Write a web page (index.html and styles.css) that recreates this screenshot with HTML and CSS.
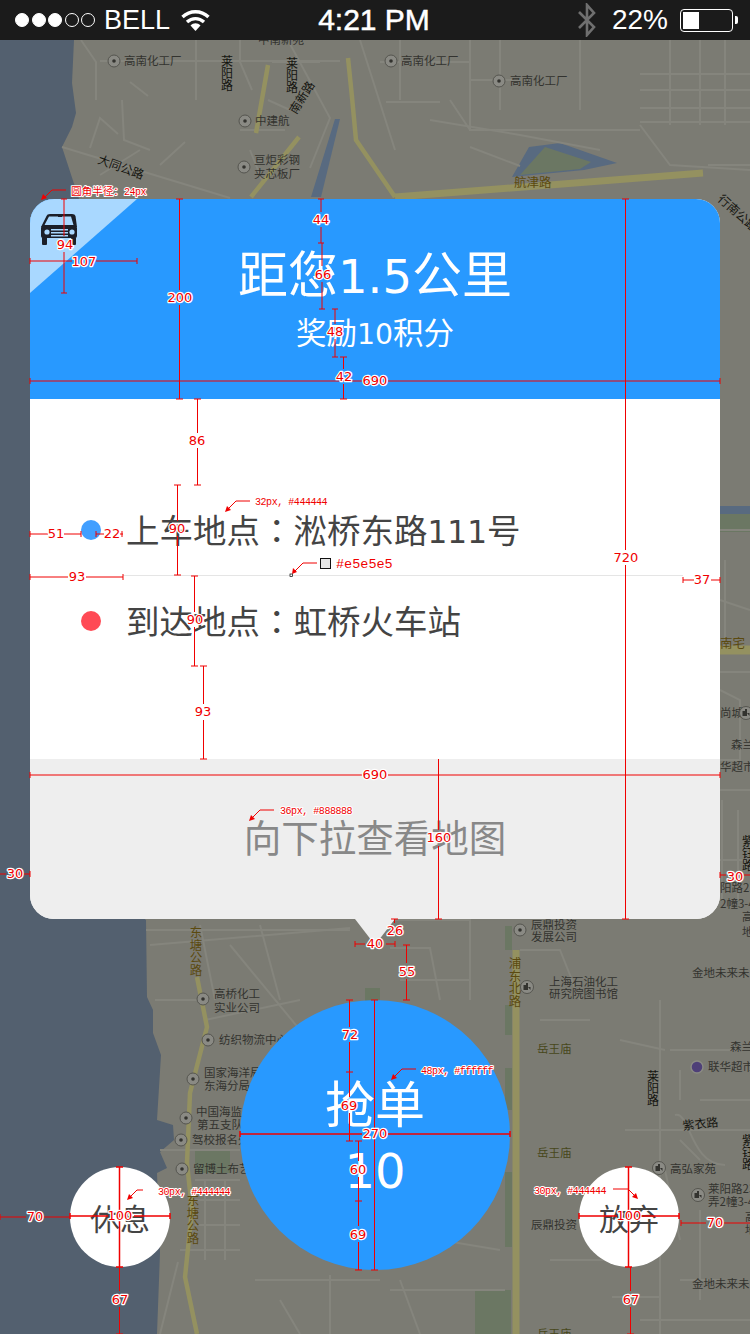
FILE: index.html
```html
<!DOCTYPE html>
<html lang="en">
<head>
    <meta charset="UTF-8">
    <title>抢单</title>
    <link rel="stylesheet" href="styles.css">
</head>
<body>
<!-- map canvas -->
<svg class="map" viewBox="0 0 750 1334" width="750" height="1334">
    <defs>
        <g id="pin">
            <circle r="6" class="pin-ring"/>
            <circle r="1.8" class="pin-dot"/>
        </g>
        <g id="pin-house">
            <circle r="6.5" class="pin-ring"/>
            <path d="M-3.5 3V-2H-1V-4H1V3M1 0H3.5V3Z" class="pin-dot"/>
        </g>
    </defs>
    <polygon class="water" points="0,40 74,40 72,83 76,113 72,127 62,147 79,199 120,300 120,900 146,920 147,997 153,1010 153,1033 161,1055 157,1120 173,1125 174,1140 160,1152 167,1168 157,1173 160,1253 157,1334 0,1334"/>

    <polygon class="lake" points="529,147 560,143 617,163 584,170 512,177"/>
    <polygon class="green" points="545,147 591,162 580,169 520,175"/>
    <polygon class="lake" points="340,119 335,119 311,197 321,197"/>
    <rect class="lake" x="720" y="506" width="30" height="8"/>
    <rect class="green" x="720" y="514" width="30" height="18"/>
    <rect class="green" x="195" y="1150" width="35" height="23"/>
    <rect class="green" x="365" y="988" width="15" height="14"/>
    <rect class="green" x="505" y="1005" width="7" height="30"/>
    <rect class="green" x="505" y="1068" width="7" height="42"/>
    <rect class="green" x="505" y="1172" width="7" height="75"/>
    <rect class="green" x="475" y="1290" width="36" height="44"/>
    <rect class="green" x="505" y="926" width="7" height="24"/>

    <!-- small streets -->
    <g class="streets">
        <path d="M100 61H340M81 40L96 62L96 100M122 100L124 140L150 150M130 82L148 96M62 147L230 198"/>
        <path d="M196 40V100M240 40V62L252 90M118 134L100 118L90 148M100 175L140 150M160 165L185 142"/>
        <path d="M290 44L330 118L310 168M272 62H320M268 100L290 110M250 150L262 180M240 130H285"/>
        <path d="M360 40L395 150M380 62H470M400 40V100M470 40V130H640M470 80H520M500 40V110M580 40V110M450 100L470 130"/>
        <path d="M386 102H440M430 120L520 135L600 150M640 74H750M640 90H750M640 108H750M640 122H750M670 40V125M700 40V125M725 40V125"/>
        <path d="M470 147L520 166M640 125L670 165L750 170M708 165H750"/>
        <path d="M720 530H750M720 600L750 610M725 560V640M720 672H750M720 690L740 700V760H720M720 790H750M722 800V900M738 810V900M720 860H750"/>
        <path d="M146 930H350M200 925L215 1000M150 945L350 928M260 925L280 1000M230 945L300 1030M180 1000H210M205 1020L300 1000"/>
        <path d="M380 920H470V1000M390 948H430L440 1000M470 930V1000M400 980H470M520 950H560L580 1000M540 1020H590"/>
        <path d="M160 1150H240M195 1180H240M195 1200H240M195 1225H240M205 1180V1260M225 1180V1260M180 1250H240M155 1000H190M178 1262L160 1334"/>
        <path d="M255 1280H380M280 1300L300 1334M330 1275V1334M400 1280L420 1334M440 1240L500 1250M390 1290H505"/>
        <path d="M660 1000V1334M620 1040L665 1050M670 1050H740M680 1070V1100M625 1130H750M675 1115C690 1110 690 1165 725 1165M680 1140L700 1160M700 1100L750 1100"/>
        <path d="M590 1220H640M700 1210V1300M680 1280H720M612 1297H660M640 1320H750M665 1170L680 1240M550 1260H610"/>
    </g>

    <!-- main roads -->
    <g class="roads">
        <path class="road-thin" d="M348 58L352 97L356 140L395 197"/>
        <path d="M395 197L703 173"/>
        <path class="road-thin" d="M268 65L256 133M299 137L251 197"/>
        <path d="M516 950V1334"/>
        <path class="road-thin" d="M197 977L207 1027L190 1093L187 1163L192 1210L185 1277L197 1334"/>
        <path class="road-fat" d="M720 650H750"/>
    </g>

    <!-- place names -->
    <text class="place" x="258" y="44">中南新苑</text>
    <use href="#pin" x="114" y="61"/><text class="place" x="124" y="65">高南化工厂</text>
    <use href="#pin" x="391" y="61"/><text class="place" x="401" y="65">高南化工厂</text>
    <use href="#pin" x="499" y="81"/><text class="place" x="510" y="85">高南化工厂</text>
    <text class="place dark vert" x="227" y="55">莱阳路</text>
    <text class="place dark vert" x="292" y="57">莱阳路</text>
    <text class="place dark" transform="translate(296 115) rotate(-58)">南新路</text>
    <use href="#pin" x="245" y="121"/><text class="place" x="255" y="125">中建航</text>
    <use href="#pin" x="244" y="167"/><text class="place" x="254" y="164">亘炬彩钢</text><text class="place" x="254" y="178">夹芯板厂</text>
    <text class="place dark" transform="translate(97 163) rotate(20)">大同公路</text>
    <text class="place road-name" x="514" y="187">航津路</text>
    <text class="place dark" transform="translate(717 200) rotate(42)">行南公路</text>

    <text class="place road-name" x="720" y="648">南宅</text>
    <text class="place" x="720" y="717">尚城</text>
    <use href="#pin-house" x="746" y="713"/>
    <text class="place" x="731" y="749">森兰</text>
    <text class="place" x="720" y="771">华超市</text>
    <text class="place" x="720" y="892">阳路23</text>
    <text class="place" x="720" y="908">2幢3-4</text>
    <text class="place" x="742" y="921">高</text>
    <text class="place" x="742" y="936">地</text>
    <text class="place dark vert" x="748" y="835">紫钰路</text>

    <text class="place road-name vert" x="196" y="926">东塘公路</text>
    <use href="#pin" x="203" y="999"/><text class="place" x="214" y="998">高桥化工</text><text class="place" x="214" y="1012">实业公司</text>
    <use href="#pin" x="208" y="1040"/><text class="place" x="219" y="1044">纺织物流中心</text>
    <use href="#pin" x="193" y="1079"/><text class="place" x="204" y="1077">国家海洋局</text><text class="place" x="204" y="1090">东海分局</text>
    <use href="#pin" x="186" y="1118"/><text class="place" x="196" y="1116">中国海监</text><text class="place" x="197" y="1129">第五支队</text>
    <use href="#pin" x="181" y="1140"/><text class="place" x="192" y="1144">驾校报名处</text>
    <use href="#pin" x="182" y="1169"/><text class="place" x="193" y="1173">留博土布艺</text>
    <text class="place road-name vert" x="193" y="1194">东塘公路</text>

    <use href="#pin" x="520" y="930"/><text class="place" x="531" y="929">辰鼎投资</text><text class="place" x="531" y="941">发展公司</text>
    <use href="#pin-house" x="527" y="987"/><text class="place" x="549" y="986">上海石油化工</text><text class="place" x="549" y="998">研究院图书馆</text>
    <text class="place road-name vert" x="515" y="957">浦东北路</text>
    <text class="place olive" x="537" y="1053">岳王庙</text>
    <text class="place olive" x="537" y="1157">岳王庙</text>
    <text class="place olive" x="537" y="1338">岳王庙</text>
    <text class="place dark vert" x="653" y="1070">莱阳路</text>
    <text class="place" x="730" y="1051">森兰</text>
    <circle class="pin-shop" cx="697" cy="1067" r="6"/><text class="place" x="708" y="1071">联华超市</text>
    <text class="place dark" transform="translate(683 1130) rotate(-6)">紫衣路</text>
    <text class="place dark vert" x="748" y="1134">紫钰路</text>
    <use href="#pin-house" x="659" y="1168"/><text class="place" x="670" y="1173">高弘家苑</text>
    <use href="#pin-house" x="698" y="1195"/><text class="place" x="708" y="1193">莱阳路23</text><text class="place" x="708" y="1206">弄2幢3-4</text>
    <text class="place" x="531" y="1229">辰鼎投资</text>
    <text class="place" x="692" y="977">金地未来未</text>
    <text class="place" x="692" y="1288">金地未来未</text>
    <text class="place" x="745" y="1221">高</text>
    <text class="place" x="745" y="1234">地</text>
</svg>

<header class="status-bar">
    <div class="status-left">
        <div class="signal">
            <span class="dot on"></span><span class="dot on"></span><span class="dot on"></span><span class="dot"></span><span class="dot"></span>
        </div>
        <span class="carrier">BELL</span>
        <svg class="wifi" viewBox="0 0 29 22" width="29" height="22">
            <path d="M1.5 8C9 1 20 1 27.5 8" fill="none" stroke="#fff" stroke-width="3.4"/>
            <path d="M6 13C11 8.500 18 8.500 23 13" fill="none" stroke="#fff" stroke-width="3.4"/>
            <path d="M9.500 16.500C12.500 13.500 16.500 13.500 19.500 16.500L14.500 22Z" fill="#fff"/>
        </svg>
    </div>
    <div class="status-time">4:21 PM</div>
    <div class="status-right">
        <svg class="bluetooth" viewBox="0 0 20 34" width="20" height="34">
            <path d="M2 9L17 24L10 32V2L17 10L2 25" fill="none" stroke="#6f6f6f" stroke-width="2.600"/>
        </svg>
        <span class="percent">22%</span>
        <div class="battery"><div class="battery-level"></div></div>
        <div class="battery-nub"></div>
    </div>
</header>

<main class="stage">
    <section class="card">
        <div class="card-head">
            <svg class="corner-tag" viewBox="0 0 107 94" width="107" height="94">
                <polygon points="0,0 107,0 0,94" fill="#a9d8ff"/>
                <g fill="#1b1f29">
                    <path d="M11 28L16.500 17Q17 15 20 15H42Q45 15 45.500 17L47 28H11ZM14.500 26H43.500L41 17.500H19Z" fill-rule="evenodd"/>
                    <rect x="11" y="27" width="36" height="12" rx="2"/>
                    <rect x="12" y="38" width="5" height="8" rx="1"/>
                    <rect x="41" y="38" width="5" height="8" rx="1"/>
                    <rect x="28" y="16" width="4" height="2"/>
                </g>
                <g fill="#a9d8ff">
                    <circle cx="17" cy="33" r="2.600"/>
                    <circle cx="42" cy="33" r="2.600"/>
                    <rect x="21" y="30" width="17" height="1.500"/>
                    <rect x="21" y="33" width="17" height="1.500"/>
                    <rect x="21" y="36" width="17" height="1.500"/>
                </g>
            </svg>
            <h1 class="head-title">距您<span class="digits">1.5</span>公里</h1>
            <p class="head-sub">奖励<span class="digits">10</span>积分</p>
        </div>
        <div class="card-route">
            <div class="route-row">
                <span class="route-dot start"></span>
                <span class="route-text">上车地点<span class="colon">：</span>淞桥东路<span class="digits">111</span>号</span>
            </div>
            <div class="route-line"></div>
            <div class="route-row">
                <span class="route-dot end"></span>
                <span class="route-text">到达地点<span class="colon">：</span>虹桥火车站</span>
            </div>
        </div>
        <div class="card-foot">向下拉查看地图</div>
    </section>
    <div class="card-arrow"></div>

    <div class="actions">
        <button class="btn-side">休息</button>
        <button class="btn-grab">
            <span class="grab-label">抢单</span>
            <span class="grab-count">10</span>
        </button>
        <button class="btn-side">放弃</button>
    </div>
</main>

<!-- red measuring marks over the design -->
<svg class="marks" viewBox="0 0 750 1334" width="750" height="1334">
    <g class="mark-lines">
        <path d="M64 199V236M64 252V293M61 199h6M61 293h6"/>
        <path d="M30 258v6M30 261H72M96 261H137M137 258v6"/>
        <path d="M179.500 199V290M179.500 305V399M176 199h7M176 399h7"/>
        <path d="M321 199V212M321 227V243M318 199h6M318 243h6"/>
        <path d="M322 243V266M322 282V309M319 309h6"/>
        <path d="M335 309V324M335 339V357M332 309h6M332 357h6"/>
        <path d="M343.500 357V369M343.500 384V399M340 357h7M340 399h7"/>
        <path d="M30 378v6M30 381H362M388 381H720M720 378v6"/>
        <path d="M625.500 199V550M625.500 565V919M622 199h7M622 919h7"/>
        <path d="M197.500 399V433M197.500 448V485M194 399h7M194 485h7"/>
        <path d="M177.500 485V521M177.500 536V575M174 485h7M174 575h7"/>
        <path d="M30 531v6M30 534H48M64 534H81M81 531v6"/>
        <path d="M96 531v6M96 534H104M120 534H123M122 531v6"/>
        <path d="M30 574v6M30 577H68M86 577H123M123 574v6"/>
        <path d="M683 577v6M683 580H694M711 580H720M720 577v6"/>
        <path d="M194.500 576V612M194.500 627V666M191 576h7M191 666h7"/>
        <path d="M203.500 666V704M203.500 720V759M200 666h7M200 759h7"/>
        <path d="M30 772v6M30 775H362M388 775H720M720 772v6"/>
        <path d="M438.500 759V830M438.500 846V919M435 919h7"/>
        <path d="M0 874H6M24 874H30M30 871v6"/>
        <path d="M720 872v6M720 875H726M744 875H750"/>
        <path d="M394.500 919V923M391 919h7"/>
        <path d="M355 941v6M355 944H365M386 944H395M395 941v6"/>
        <path d="M406.500 945V963M406.500 979V1000M403 945h7M403 1000h7"/>
        <path d="M349.500 1000V1027M349.500 1042V1097M346 1000h7M346 1072h7M349.500 1113V1141M346 1141h7"/>
        <path d="M358.500 1141V1161M358.500 1177V1226M355 1141h7M355 1201h7M358.500 1242V1270M355 1270h7"/>
        <path d="M374.500 1000V1270M371 1000h7M371 1270h7"/>
        <path class="bold" d="M240 1131v6M240 1134H362M388 1134H510M510 1131v6"/>
        <path class="bold" d="M119.500 1167V1267M116 1167h7M116 1267h7M70 1213v6M70 1216H108M134 1216H170M170 1213v6"/>
        <path d="M0 1214v6M0 1217H26M44 1217H70"/>
        <path d="M119.500 1267V1291M119.500 1307V1334M116 1334h7"/>
        <path class="bold" d="M628.500 1167V1267M625 1167h7M625 1267h7M579 1213v6M579 1216H617M641 1216H679M679 1213v6"/>
        <path d="M681 1220v6M681 1223H706M724 1223H750"/>
        <path d="M630.500 1267V1291M630.500 1307V1334M627 1334h7"/>
    </g>

    <g class="mark-arrows">
        <path d="M66 190H52L44 198"/>
        <path d="M250 501H236L228 509"/>
        <path d="M317 563H303L294 572"/>
        <path d="M274 810H260L252 818"/>
        <path d="M416 1069H402L394 1077"/>
        <path d="M143 1190H137L130 1197"/>
        <path d="M613 1189H628L635 1196"/>
    </g>
    <g class="mark-heads">
        <polygon points="41,200 43,194 47,198"/>
        <polygon points="225,512 227,506 231,510"/>
        <polygon points="292,574 293,568 297,572"/>
        <polygon points="249,821 251,815 255,819"/>
        <polygon points="391,1080 393,1074 397,1078"/>
        <polygon points="127,1200 129,1194 133,1198"/>
        <polygon points="638,1199 632,1197 636,1193"/>
    </g>
    <rect class="mark-pick" x="290" y="574" width="2.500" height="2.500"/>
    <rect class="mark-swatch" x="320.500" y="558.500" width="10" height="10"/>

    <text class="num" x="65" y="249">94</text>
    <text class="num" x="84" y="266">107</text>
    <text class="num" x="180" y="302">200</text>
    <text class="num" x="321" y="224">44</text>
    <text class="num" x="323" y="279">66</text>
    <text class="num" x="335" y="336">48</text>
    <text class="num" x="344" y="381">42</text>
    <text class="num" x="375" y="385">690</text>
    <text class="num" x="626" y="562">720</text>
    <text class="num" x="197" y="445">86</text>
    <text class="num" x="177" y="533">90</text>
    <text class="num" x="56" y="538">51</text>
    <text class="num" x="112" y="538">22</text>
    <text class="num" x="77" y="581">93</text>
    <text class="num" x="702" y="584">37</text>
    <text class="num" x="195" y="624">90</text>
    <text class="num" x="203" y="716">93</text>
    <text class="num" x="375" y="779">690</text>
    <text class="num" x="439" y="842">160</text>
    <text class="num" x="15" y="878">30</text>
    <text class="num" x="735" y="881">30</text>
    <text class="num" x="395" y="935">26</text>
    <text class="num" x="375" y="948">40</text>
    <text class="num" x="407" y="976">55</text>
    <text class="num" x="350" y="1039">72</text>
    <text class="num" x="349" y="1110">69</text>
    <text class="num" x="375" y="1138">270</text>
    <text class="num" x="358" y="1174">60</text>
    <text class="num" x="358" y="1239">69</text>
    <text class="num" x="120" y="1220">100</text>
    <text class="num" x="35" y="1221">70</text>
    <text class="num" x="120" y="1304">67</text>
    <text class="num" x="629" y="1220">100</text>
    <text class="num" x="715" y="1227">70</text>
    <text class="num" x="631" y="1304">67</text>

    <text class="note" x="71" y="195">圆角半径：<tspan class="note-en">24px</tspan></text>
    <text class="note note-en" x="255" y="505">32px, #444444</text>
    <text class="note note-en" x="280" y="814">36px, #888888</text>
    <text class="note note-en" x="421" y="1074">48px, #ffffff</text>
    <text class="note note-en" x="158" y="1195">30px, #444444</text>
    <text class="note note-en" x="534" y="1194">30px, #444444</text>
    <text class="swatch-name" x="336" y="568">#e5e5e5</text>
</svg>
</body>
</html>
```

FILE: styles.css
```css
*{
    box-sizing: border-box;
}
html, body{
    margin: 0;
    padding: 0;
}
body{
    position: relative;
    width: 750px;
    height: 1334px;
    overflow: hidden;
    background-color: #7b7b73;
    font-family: "DejaVu Sans", "Noto Sans CJK SC", sans-serif;
}

/* map */
.map{
    position: absolute;
    left: 0;
    top: 0;
}
.water{
    fill: #53606f;
}
.lake{
    fill: #586a80;
}
.green{
    fill: #6b7763;
}
.streets path{
    fill: none;
    stroke: #85857d;
    stroke-width: 2;
}
.roads path{
    fill: none;
    stroke: #949160;
    stroke-width: 7;
}
.roads .road-thin{
    stroke-width: 4.500;
}
.roads .road-fat{
    stroke-width: 9;
}
.place{
    font: 11.500px "Noto Sans CJK SC", sans-serif;
    fill: #33332f;
}
.place.dark{
    fill: #14140f;
    font-size: 12px;
}
.place.road-name{
    fill: #5b4a10;
    font-size: 12.500px;
}
.place.olive{
    fill: #47471a;
}
.vert{
    writing-mode: vertical-rl;
    text-orientation: upright;
}
.pin-ring{
    fill: #8a8a84;
    stroke: #55554f;
    stroke-width: 1;
}
.pin-dot{
    fill: #33332f;
}
.pin-shop{
    fill: #4e3f78;
    stroke: #8a8a84;
    stroke-width: 1.500;
}

/* status bar */
.status-bar{
    position: relative;
    display: flex;
    align-items: center;
    height: 40px;
    background-color: #1b1b1b;
    color: #fff;
    font-family: "Liberation Sans", sans-serif;
}
.status-left{
    flex: 1;
    display: flex;
    align-items: center;
    padding-left: 15px;
}
.status-right{
    flex: 1;
    display: flex;
    align-items: center;
    justify-content: flex-end;
    padding-right: 12px;
}
.signal{
    display: flex;
    gap: 2.500px;
}
.dot{
    width: 14px;
    height: 14px;
    border: 1px solid #fff;
    border-radius: 50%;
}
.dot.on{
    background-color: #fff;
}
.carrier{
    margin-left: 9px;
    font-size: 27px;
    line-height: 40px;
}
.wifi{
    margin-left: 11px;
}
.status-time{
    margin-right: 5px;
    font-size: 30px;
    line-height: 40px;
    -webkit-text-stroke: 0.5px #fff;
}
.bluetooth{
    margin-right: 15px;
}
.percent{
    font-size: 28px;
    line-height: 40px;
}
.battery{
    width: 53px;
    height: 23px;
    margin-left: 12px;
    padding: 2px;
    border: 1.500px solid #fff;
    border-radius: 4px;
}
.battery-level{
    width: 16px;
    height: 100%;
    background-color: #fff;
}
.battery-nub{
    width: 3px;
    height: 8px;
    margin-left: 2px;
    background-color: #fff;
    border-radius: 0 2px 2px 0;
}

/* popup card */
.stage{
    position: relative;
    padding-top: 159px;
}
.card{
    width: 690px;
    margin: 0 30px;
    border-radius: 24px;
    overflow: hidden;
    background-color: #fff;
}
.card-head{
    position: relative;
    height: 200px;
    padding: 44px 0 42px;
    background-color: #2899ff;
    color: #fff;
    text-align: center;
}
.corner-tag{
    position: absolute;
    left: 0;
    top: 0;
}
.head-title{
    margin: 0;
    font-size: 50px;
    font-weight: 400;
    line-height: 66px;
}
.head-sub{
    margin: 0;
    font-size: 30.500px;
    line-height: 48px;
}
.digits{
    font-size: 0.93em;
}
.colon{
    font-family: "Noto Sans CJK TC", sans-serif;
}
.card-route{
    height: 360px;
    padding-top: 86px;
}
.route-row{
    display: flex;
    align-items: center;
    height: 90px;
    padding-left: 51px;
}
.route-dot{
    width: 20px;
    height: 20px;
    margin-right: 25px;
    border-radius: 50%;
}
.route-dot.start{
    background-color: #419fff;
}
.route-dot.end{
    background-color: #ff4a55;
}
.route-text{
    font-size: 33.500px;
    line-height: 40px;
    color: #444444;
}
.route-line{
    height: 1px;
    margin: 0 37px 0 93px;
    background-color: #e5e5e5;
}
.card-foot{
    height: 160px;
    background-color: #eeeeee;
    font-size: 37.500px;
    line-height: 160px;
    text-align: center;
    color: #888888;
}
.card-arrow{
    width: 0;
    height: 0;
    margin: 0 auto;
    border-style: solid;
    border-width: 26px 20px 0;
    border-color: #eeeeee transparent transparent;
}

/* bottom buttons */
.actions{
    display: flex;
    margin-top: 55px;
    padding-left: 70px;
}
.btn-side, .btn-grab{
    padding: 0;
    border: none;
    border-radius: 50%;
    font-family: inherit;
}
.btn-side{
    align-self: flex-end;
    width: 100px;
    height: 100px;
    margin-bottom: 3px;
    background-color: #fff;
    font-size: 30px;
    color: #444444;
}
.btn-grab{
    display: flex;
    flex-direction: column;
    align-items: center;
    width: 270px;
    height: 270px;
    margin: 0 69px 0 70px;
    padding-top: 72px;
    background-color: #2899ff;
    color: #fff;
}
.grab-label{
    font-size: 50px;
    line-height: 69px;
}
.grab-count{
    font-size: 48px;
    line-height: 60px;
}

/* measuring marks */
.marks{
    position: absolute;
    left: 0;
    top: 0;
}
.mark-lines path, .mark-arrows path{
    fill: none;
    stroke: #f00000;
    stroke-width: 1;
}
.mark-lines .bold{
    stroke-width: 1.500;
}
.mark-heads polygon{
    fill: #f00000;
}
.mark-pick{
    fill: #fff;
    stroke: #000;
    stroke-width: 0.700;
}
.mark-swatch{
    fill: #e5e5e5;
    stroke: #111;
    stroke-width: 1;
}
.num, .note{
    fill: #f00000;
    stroke: #fff;
    paint-order: stroke;
    stroke-linejoin: round;
}
.num{
    font: 13px "DejaVu Sans", sans-serif;
    text-anchor: middle;
    stroke-width: 2.500;
}
.note{
    font: 10.600px "Noto Sans CJK SC", sans-serif;
    stroke-width: 2;
}
.note-en{
    font: 10px "Liberation Mono", monospace;
    letter-spacing: -0.450px;
}
.swatch-name{
    font: 13.500px "Liberation Mono", monospace;
    fill: #f00000;
}
```
